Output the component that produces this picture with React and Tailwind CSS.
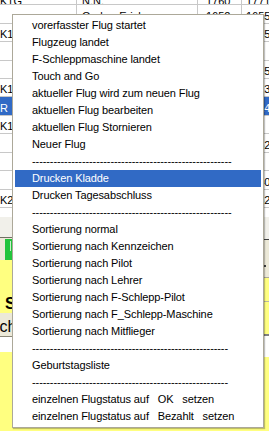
const DASH56 = "--------------------------------------------------------";
const DASH55 = "-------------------------------------------------------";

const items = [
  { t: "vorerfasster Flug startet" },
  { t: "Flugzeug landet" },
  { t: "F-Schleppmaschine landet" },
  { t: "Touch and Go" },
  { t: "aktueller Flug wird zum neuen Flug" },
  { t: "aktuellen Flug bearbeiten" },
  { t: "aktuellen Flug Stornieren" },
  { t: "Neuer Flug" },
  { t: DASH56 },
  { t: "Drucken Kladde", hl: true },
  { t: "Drucken Tagesabschluss" },
  { t: DASH56 },
  { t: "Sortierung normal" },
  { t: "Sortierung nach Kennzeichen" },
  { t: "Sortierung nach Pilot" },
  { t: "Sortierung nach Lehrer" },
  { t: "Sortierung nach F-Schlepp-Pilot" },
  { t: "Sortierung nach F_Schlepp-Maschine" },
  { t: "Sortierung nach Mitflieger" },
  { t: DASH55 },
  { t: "Geburtstagsliste" },
  { t: DASH55 },
  { t: "einzelnen Flugstatus auf   OK   setzen" },
  { t: "einzelnen Flugstatus auf   Bezahlt   setzen" },
];

const rows = [
  { h: "h-[19px]", a: "K1G", b: "N.N.", c: "1760", d: "1771", first: true },
  { h: "h-[19px]", a: "", b: "Gruber Erich", c: "1652", d: "1655" },
  { h: "h-[18px]", a: "K1", b: "", c: "", d: "1655" },
  { h: "h-[19px]", a: "", b: "", c: "", d: "" },
  { h: "h-[18px]", a: "", b: "", c: "", d: "1635" },
  { h: "h-[18px]", a: "K1", b: "", c: "", d: "1623" },
  { h: "h-[19px]", a: "R", b: "", c: "", d: "1614", sel: true },
  { h: "h-[18px]", a: "K1", b: "", c: "", d: "" },
  { h: "h-[19px]", a: "", b: "", c: "", d: "1552" },
  { h: "h-[18px]", a: "", b: "", c: "", d: "" },
  { h: "h-[19px]", a: "", b: "", c: "", d: "1540" },
  { h: "h-[18px]", a: "K2", b: "", c: "", d: "1532" },
  { h: "h-[9px]", a: "", b: "", c: "", d: "", last: true },
];

function Row({ r }) {
  const base = r.sel ? "bg-[#316ac5] text-white" : "bg-white text-black";
  const border = r.last ? "" : "border-b border-[#c8c8c8]";
  const txt = r.first ? "mb-[-3px]" : "mb-[1px]";
  return (
    <div className={`flex shrink-0 ${r.h} ${border} ${base}`}>
      <div className="w-[77px] border-r border-[#c8c8c8] flex items-end overflow-hidden">
        <span className={`leading-[11px] whitespace-pre ${txt}`}>{r.a}</span>
      </div>
      <div className="w-[121px] border-r border-[#c8c8c8] flex items-end pl-[5px] overflow-hidden">
        <span className={`leading-[11px] whitespace-pre ${txt}`}>{r.b}</span>
      </div>
      <div className="w-[44px] border-r border-[#c8c8c8] flex items-end pl-[8px] overflow-hidden">
        <span className={`leading-[11px] whitespace-pre ${txt}`}>{r.c}</span>
      </div>
      <div className="flex-1 flex items-end pl-[4px] overflow-hidden">
        <span className={`leading-[11px] whitespace-pre ${txt}`}>{r.d}</span>
      </div>
    </div>
  );
}

export default function App() {
  return (
    <div className="relative w-[269px] h-[431px] overflow-hidden bg-white font-['Liberation_Sans',Arial,sans-serif] text-[11px] text-black">
      {/* grid behind the menu */}
      <div className="flex flex-col mt-[-14px] h-[231px]">
        {rows.map((r, i) => (
          <Row key={i} r={r} />
        ))}
      </div>

      {/* lower part of the window */}
      <div className="flex h-[214px]">
        {/* left visible strip */}
        <div className="w-[12px] flex flex-col shrink-0">
          <div className="h-[20px] bg-[#f1f0ea]" />
          <div className="h-[1px] bg-[#716f64]" />
          <div className="h-[22px] bg-[#ece9d8] flex pl-[5px] pt-[1px]">
            <div className="w-[7px] h-full bg-[#22c43c] flex justify-end pr-[1px] pt-[2px]">
              <div className="w-[1px] h-[10px] bg-[#c8f0cc]" />
            </div>
          </div>
          <div className="h-[53px] bg-[#ffff80] flex items-end pl-[5px]">
            <span className="text-[16px] font-bold leading-[18px]">S</span>
          </div>
          <div className="h-[24px] bg-[#ece9d8] border-b border-[#8a8778] flex items-end overflow-hidden">
            <span className="text-[16px] leading-[18px] ml-[-20px] whitespace-pre">Such</span>
          </div>
          <div className="h-[15px] bg-white" />
          <div className="flex-1 bg-[#ffff80]" />
        </div>

        {/* middle, covered by the menu */}
        <div className="flex-1 bg-[#ffff80]" />

        {/* right visible strip */}
        <div className="w-[5px] flex flex-col shrink-0">
          <div className="h-[22px] bg-[#f1f0ea]" />
          <div className="h-[1px] bg-[#404040]" />
          <div className="h-[37px] bg-[#ece9d8] flex flex-col justify-end pb-[10px]">
            <div className="w-[2px] h-[2px] bg-[#404040]" />
          </div>
          <div className="h-[1px] bg-[#aca899]" />
          <div className="h-[23px] bg-[#ffff80]" />
          <div className="h-[1px] bg-[#b8b8a0]" />
          <div className="h-[32px] bg-[#ffff80]" />
          <div className="h-[2px] bg-[#808080]" />
          <div className="h-[21px] bg-white" />
          <div className="flex-1 bg-[#ffff80]" />
        </div>
      </div>

      {/* popup context menu */}
      <div className="absolute left-[12px] top-[14px] w-[252px] h-[414px] bg-white border border-[#aca899] p-[2px] shadow-[1px_1px_1px_rgba(0,0,0,0.25)]">
        {items.map((it, i) => (
          <div
            key={i}
            className={`h-[17px] pl-[17px] flex items-center whitespace-pre leading-[17px] overflow-hidden tracking-[-0.1px] ${
              it.hl ? "bg-[#316ac5] text-white" : "text-black"
            }`}
          >
            {it.t}
          </div>
        ))}
      </div>
    </div>
  );
}
